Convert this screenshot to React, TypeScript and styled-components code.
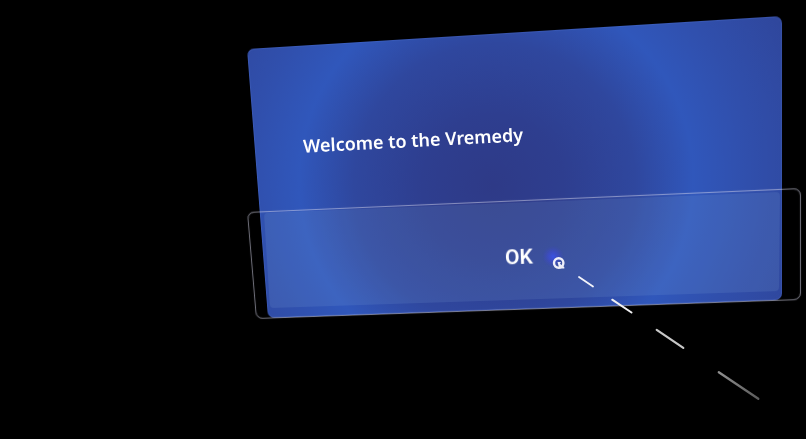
import React from "react";
import styled, { createGlobalStyle } from "styled-components";

type Point = [number, number];
type Quad = [Point, Point, Point, Point];

/** Projects a w × h box onto four corners (clockwise from the top left). */
function project(w: number, h: number, quad: Quad): string {
  const [[x0, y0], [x1, y1], [x2, y2], [x3, y3]] = quad;
  const dx1 = x1 - x2;
  const dx2 = x3 - x2;
  const dy1 = y1 - y2;
  const dy2 = y3 - y2;
  const sx = x0 - x1 + x2 - x3;
  const sy = y0 - y1 + y2 - y3;
  const den = dx1 * dy2 - dx2 * dy1;
  const g = (sx * dy2 - dx2 * sy) / den;
  const k = (dx1 * sy - sx * dy1) / den;
  const m = [
    (x1 - x0 + g * x1) / w, (y1 - y0 + g * y1) / w, 0, g / w,
    (x3 - x0 + k * x3) / h, (y3 - y0 + k * y3) / h, 0, k / h,
    0, 0, 1, 0,
    x0, y0, 0, 1,
  ];
  return `matrix3d(${m.map((v) => v.toFixed(8)).join(",")})`;
}

const GlobalStyle = createGlobalStyle`
  *, *::before, *::after { box-sizing: border-box; }
  body {
    margin: 0;
    background: #000;
    color: #fff;
    font-family: "Noto Sans", "Open Sans", sans-serif;
  }
`;

const Scene = styled.main`
  min-height: 100vh;
  display: flex;
  justify-content: flex-end;
  align-items: flex-start;
  padding: 16px 24px;
  overflow: hidden;
`;

const Surface = styled.span<{ $w: number; $h: number; $quad: Quad; $radius: number }>`
  position: absolute;
  top: 0;
  left: 0;
  width: ${(p) => p.$w}px;
  height: ${(p) => p.$h}px;
  border-radius: ${(p) => p.$radius}px;
  transform-origin: 0 0;
  transform: ${(p) => project(p.$w, p.$h, p.$quad)};
  will-change: transform;
  outline: 4px solid transparent;
  pointer-events: none;
`;

const Backdrop = styled(Surface)`
  background: radial-gradient(
    circle at 46% 54%,
    #2e3a87 0,
    #2e3e8f 72px,
    #2f479e 144px,
    #3057bb 202px,
    #304fac 256px,
    #2f4294 360px
  );
  box-shadow: inset 0 0 1px 1px rgba(90, 120, 210, 0.25);
`;

const Highlight = styled(Surface)`
  background: rgba(145, 185, 225, 0.13);
`;

const Outline = styled(Surface)`
  border: 1px solid rgba(215, 215, 235, 0.5);
  box-shadow: 0 0 1px rgba(215, 215, 235, 0.3), inset 0 0 1px rgba(215, 215, 235, 0.3);
`;

const Dialog = styled.section`
  position: relative;
  width: 535px;
  display: flex;
  flex-direction: column;
`;

const Title = styled.h1`
  position: relative;
  margin: 0;
  padding: 108px 0 32px 56px;
  font-size: 18px;
  line-height: 32px;
  font-weight: 600;
`;

const Tilted = styled.span<{ $angle: number }>`
  display: inline-block;
  transform: rotate(${(p) => p.$angle}deg);
`;

const Footer = styled.footer`
  position: relative;
  display: flex;
  padding: 4px 2px 10px 17px;
`;

const ConfirmButton = styled.button`
  position: relative;
  flex: 1;
  height: 116px;
  padding: 14px 6px 0 0;
  border: 0;
  background: none;
  color: #fff;
  font-family: Roboto, sans-serif;
  font-size: 21px;
  line-height: 24px;
  font-weight: 600;
  cursor: pointer;
`;

const Pointer = styled.svg`
  position: absolute;
  left: 288px;
  top: 224px;
  width: 232px;
  height: 168px;
  pointer-events: none;
`;

const rays = [
  { x1: 44, y1: 37, x2: 58, y2: 46.5, color: "#f4f4fa", width: 1.8 },
  { x1: 77.2, y1: 59.7, x2: 96.5, y2: 72.5, color: "#f0f0f2", width: 2 },
  { x1: 121.7, y1: 89.8, x2: 148.3, y2: 107.8, color: "#c8c8c8", width: 2.2 },
  { x1: 183.8, y1: 132.2, x2: 223.3, y2: 158.8, color: "url(#ray-fade)", width: 2.3 },
];

export default function App() {
  return (
    <>
      <GlobalStyle />
      <Scene>
        <Dialog role="dialog" aria-labelledby="dialog-title">
          <Backdrop $w={535} $h={284} $radius={7} $quad={[[0, 33], [535, 0], [535, 284], [21, 302]]} />
          <Title id="dialog-title">
            <Tilted $angle={-3}>Welcome to the Vremedy</Tilted>
          </Title>
          <Footer>
            <ConfirmButton type="button">
              <Highlight $w={514} $h={98} $radius={4} $quad={[[0, 21], [516, 0], [515, 99], [6, 116]]} />
              <Tilted $angle={-2}>OK</Tilted>
            </ConfirmButton>
            <Outline $w={554} $h={110} $radius={7} $quad={[[0, 24], [554, 0], [554, 112], [9, 131]]} />
          </Footer>
          <Pointer viewBox="0 0 232 168" aria-hidden="true">
            <defs>
              <radialGradient id="glow">
                <stop offset="0" stopColor="#3a52ea" stopOpacity="0.9" />
                <stop offset="0.5" stopColor="#3d4ad0" stopOpacity="0.6" />
                <stop offset="1" stopColor="#3d49b8" stopOpacity="0" />
              </radialGradient>
              <linearGradient id="ray-fade" gradientUnits="userSpaceOnUse" x1="184" y1="132" x2="223" y2="159">
                <stop offset="0" stopColor="#8f8f8f" />
                <stop offset="1" stopColor="#5c5c5c" />
              </linearGradient>
            </defs>
            <circle cx="18" cy="16.5" r="11" fill="url(#glow)" />
            <circle cx="23.7" cy="23" r="4.7" fill="none" stroke="#eeeef8" strokeWidth="2.4" />
            <path d="M22.5 22h3.5l-1 1.700 4.300 3.300v1.500h-5z" fill="#eeeef8" />
            {rays.map((r) => (
              <line key={r.x1} x1={r.x1} y1={r.y1} x2={r.x2} y2={r.y2} stroke={r.color} strokeWidth={r.width} strokeLinecap="round" />
            ))}
          </Pointer>
        </Dialog>
      </Scene>
    </>
  );
}
